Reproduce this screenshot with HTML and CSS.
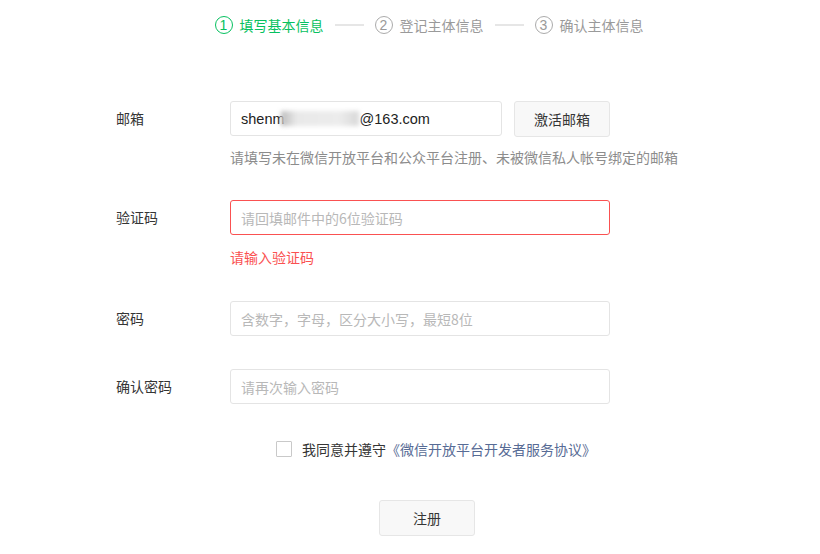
FILE: index.html
```html
<!DOCTYPE html>
<html lang="zh">
<head>
<meta charset="utf-8">
<link rel="stylesheet" href="styles.css">
</head>
<body>
<div class="page">
  <div class="steps">
    <div class="step active"><span class="num">1</span><span class="step-text">填写基本信息</span></div>
    <span class="step-line"></span>
    <div class="step"><span class="num">2</span><span class="step-text">登记主体信息</span></div>
    <span class="step-line"></span>
    <div class="step"><span class="num">3</span><span class="step-text">确认主体信息</span></div>
  </div>

  <div class="form">
    <div class="item item-email">
      <label class="label">邮箱</label>
      <div class="control">
        <div class="line">
          <div class="input input-email"><span>shenm</span><span class="blur"></span><span>@163.com</span></div>
          <button class="btn btn-side">激活邮箱</button>
        </div>
        <div class="hint">请填写未在微信开放平台和公众平台注册、未被微信私人帐号绑定的邮箱</div>
      </div>
    </div>

    <div class="item item-code">
      <label class="label">验证码</label>
      <div class="control">
        <div class="input input-wide input-error"><span class="ph">请回填邮件中的6位验证码</span></div>
        <div class="error">请输入验证码</div>
      </div>
    </div>

    <div class="item item-pwd">
      <label class="label">密码</label>
      <div class="control">
        <div class="input input-wide"><span class="ph">含数字，字母，区分大小写，最短8位</span></div>
      </div>
    </div>

    <div class="item item-pwd2">
      <label class="label">确认密码</label>
      <div class="control">
        <div class="input input-wide"><span class="ph">请再次输入密码</span></div>
      </div>
    </div>

    <div class="agree">
      <span class="checkbox"></span>
      <span class="agree-text">我同意并遵守<a class="link">《微信开放平台开发者服务协议》</a></span>
    </div>

    <div class="submit-row">
      <button class="btn btn-submit">注册</button>
    </div>
  </div>
</div>
</body>
</html>
```
FILE: styles.css
```css
* { box-sizing: border-box; }
html, body {
  margin: 0;
  padding: 0;
  background: #fff;
  font-family: "Noto Sans CJK SC", "Liberation Sans", sans-serif;
  font-size: 14px;
  color: #353535;
}
.page {
  width: 820px;
  height: 554px;
  overflow: hidden;
}
.steps {
  display: flex;
  align-items: center;
  justify-content: center;
  padding-top: 15px;
  height: 35px;
  padding-left: 38px;
}
.step {
  display: flex;
  align-items: center;
  color: #9a9a9a;
  font-size: 14px;
  line-height: 20px;
}
.step .num {
  width: 18px;
  height: 18px;
  border: 1.3px solid #ababab;
  border-radius: 50%;
  display: flex;
  align-items: center;
  justify-content: center;
  font-family: "Liberation Sans", sans-serif;
  font-size: 14px;
  line-height: 1;
  color: #9a9a9a;
  margin-right: 7px;
}
.step.active, .step.active .num { color: #07c160; border-color: #07c160; }
.step-line {
  width: 29px;
  height: 2px;
  background: #e6e6e6;
  margin: 0 11px;
}
.form {
  padding-left: 116px;
  padding-top: 66px;
}
.item {
  display: flex;
  align-items: flex-start;
}
.label {
  width: 114px;
  line-height: 35px;
  font-size: 14px;
  color: #353535;
}
.control { display: flex; flex-direction: column; }
.line { display: flex; gap: 12px; }
.input {
  height: 35px;
  border: 1px solid #e4e4e4;
  border-radius: 3px;
  display: flex;
  align-items: center;
  padding: 0 10px;
  font-size: 14px;
  background: #fff;
  white-space: nowrap;
}
.input-email {
  width: 272px;
  font-family: "Liberation Sans", "Noto Sans CJK SC", sans-serif;
  font-size: 14.5px;
  color: #222;
}
.blur {
  display: inline-block;
  width: 78px;
  height: 15px;
  background: linear-gradient(90deg, #bcbcbc 0%, #e9e9e9 20%, #ececec 75%, #d8d8d8 100%);
  filter: blur(2px);
  margin: 0 1px 0 -4px;
}
.input-wide { width: 380px; }
.input-error { border-color: #fa5151; }
.ph { color: #b8b8b8; }
.btn {
  font-family: "Noto Sans CJK SC", "Liberation Sans", sans-serif;
  font-size: 14px;
  color: #353535;
  background: #f8f8f8;
  border: 1px solid #e6e6e6;
  border-radius: 3px;
  height: 36px;
  width: 96px;
  padding: 0;
}
.hint {
  margin-top: 10px;
  line-height: 20px;
  color: #8c8c8c;
  font-size: 14px;
}
.error {
  margin-top: 12px;
  line-height: 20px;
  color: #fa5151;
}
.item-code { margin-top: 33px; }
.item-pwd { margin-top: 34px; }
.item-pwd2 { margin-top: 33px; }
.agree {
  display: flex;
  align-items: center;
  margin-left: 160px;
  margin-top: 35px;
  height: 20px;
}
.checkbox {
  width: 16px;
  height: 16px;
  border: 1px solid #c9c9c9;
  border-radius: 1px;
  margin-right: 10px;
}
.agree-text { color: #353535; }
.link { color: #576b95; text-decoration: none; }
.submit-row {
  margin-left: 263px;
  margin-top: 41px;
}
.btn-submit { width: 96px; height: 36px; }
```
